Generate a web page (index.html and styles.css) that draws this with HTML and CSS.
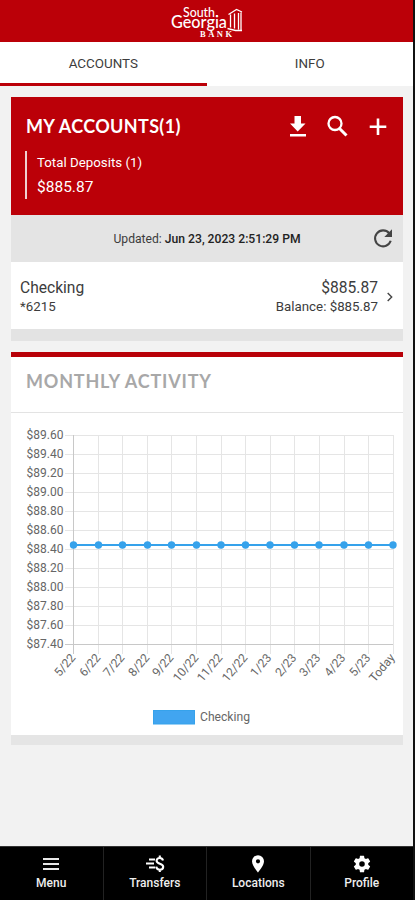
FILE: index.html
```html
<!DOCTYPE html>
<html lang="en">
<head>
<meta charset="utf-8">
<title>South Georgia Bank</title>
<link rel="stylesheet" href="styles.css">
</head>
<body>
<div class="screen">
  <header class="brand">
    <svg width="74" height="36" viewBox="169 4 74 36" fill="#fff" class="logo">
      <text x="182" y="16.500" font-size="14" textLength="32" lengthAdjust="spacingAndGlyphs">South</text>
      <text x="170" y="28" font-size="16.500" textLength="56" lengthAdjust="spacingAndGlyphs">Georgia</text>
      <text x="199" y="37" class="logo-bank" font-size="8.500" textLength="32">BANK</text>
      <path d="M227.500 14.500l8-5 5.500 2.500M229.500 14.500v13M233.500 13.500v15M237.500 13v16.500M240 12.500v18M226.500 28.500l8 2h6.500" fill="none" stroke="#fff" stroke-width="1.300"/>
      <path d="M215 15h1.500v1.500H215z"/>
    </svg>
  </header>
  <nav class="tabs">
    <div class="tab active"><span>ACCOUNTS</span></div>
    <div class="tab"><span>INFO</span></div>
  </nav>
  <main>
    <section class="card accounts">
      <div class="summary">
        <div class="summary-top">
          <h1>MY ACCOUNTS(1)</h1>
          <svg width="100" height="24" viewBox="288 115 100 24" fill="#fff">
            <path d="M294.500 116h6.500v7.500h4.500l-7.800 8-7.700-8h4.500zM290 134h16v2.500h-16z"/>
            <circle cx="335" cy="123.500" r="6.500" fill="none" stroke="#fff" stroke-width="2.300"/>
            <path d="M339.500 128.500l7 7" stroke="#fff" stroke-width="3"/>
            <path d="M376.700 118.500h2.600v7h7v2.500h-7v7h-2.600v-7h-7v-2.500h7z"/>
          </svg>
        </div>
        <div class="total">
          <div class="total-label">Total Deposits (1)</div>
          <div class="total-value">$885.87</div>
        </div>
      </div>
      <div class="updated">
        <span>Updated: <b>Jun 23, 2023 2:51:29 PM</b></span>
        <svg class="refresh" width="20" height="20" viewBox="0 0 20 20">
          <path d="M16.200 4.200A8 8 0 1 0 17.700 11.800" fill="none" stroke="#444" stroke-width="2.100"/>
          <path d="M19 .3v7.700h-7.700z" fill="#444"/>
        </svg>
      </div>
      <div class="account">
        <div class="col"><div class="name">Checking</div><div class="sub">*6215</div></div>
        <div class="col amount"><div class="name">$885.87</div><div class="sub">Balance: $885.87</div></div>
        <svg width="6" height="10" viewBox="0 0 6 10" fill="none" stroke="#444" stroke-width="1.400"><path d="M.7 1l4 4-4 4"/></svg>
      </div>
    </section>
    <section class="card activity">
      <h2>MONTHLY ACTIVITY</h2>
      <svg class="chart" width="392" height="322" viewBox="11 413 392 322">
        <path class="grid" d="M65 435.500H393M65 454.500H393M65 473.500H393M65 492.500H393M65 511.500H393M65 530.500H393M65 549.500H393M65 568.500H393M65 587.500H393M65 606.500H393M65 625.500H393"/>
        <path class="grid" d="M98.500 435V654M122.500 435V654M147.500 435V654M171.500 435V654M196.500 435V654M221.500 435V654M245.500 435V654M270.500 435V654M294.500 435V654M319.500 435V654M344.500 435V654M368.500 435V654M393.500 435V654"/>
        <path class="axis" d="M65 644.500H393M73.500 435V654"/>
        <g class="ylabels">
          <text x="63.500" y="438.500">$89.60</text><text x="63.500" y="457.500">$89.40</text><text x="63.500" y="476.500">$89.20</text><text x="63.500" y="495.500">$89.00</text><text x="63.500" y="514.500">$88.80</text><text x="63.500" y="533.500">$88.60</text><text x="63.500" y="552.500">$88.40</text><text x="63.500" y="571.500">$88.20</text><text x="63.500" y="590.500">$88.00</text><text x="63.500" y="609.500">$87.80</text><text x="63.500" y="628.500">$87.60</text><text x="63.500" y="647.500">$87.40</text>
        </g>
        <path d="M73.500 545H393" stroke="#36a2eb" stroke-width="2.200"/>
        <g fill="#36a2eb">
          <circle cx="73.500" cy="545" r="3.700"/><circle cx="98.500" cy="545" r="3.700"/><circle cx="122.500" cy="545" r="3.700"/><circle cx="147.500" cy="545" r="3.700"/><circle cx="171.500" cy="545" r="3.700"/><circle cx="196.500" cy="545" r="3.700"/><circle cx="221" cy="545" r="3.700"/><circle cx="245.500" cy="545" r="3.700"/><circle cx="270" cy="545" r="3.700"/><circle cx="294.500" cy="545" r="3.700"/><circle cx="319" cy="545" r="3.700"/><circle cx="344" cy="545" r="3.700"/><circle cx="368.500" cy="545" r="3.700"/><circle cx="393" cy="545" r="3.700"/>
        </g>
        <g class="xlabels">
          <text transform="translate(76 658) rotate(-50)">5/22</text>
          <text transform="translate(101 658) rotate(-50)">6/22</text>
          <text transform="translate(125 658) rotate(-50)">7/22</text>
          <text transform="translate(150 658) rotate(-50)">8/22</text>
          <text transform="translate(174 658) rotate(-50)">9/22</text>
          <text transform="translate(199 658) rotate(-50)">10/22</text>
          <text transform="translate(223 658) rotate(-50)">11/22</text>
          <text transform="translate(248 658) rotate(-50)">12/22</text>
          <text transform="translate(272 658) rotate(-50)">1/23</text>
          <text transform="translate(297 658) rotate(-50)">2/23</text>
          <text transform="translate(321 658) rotate(-50)">3/23</text>
          <text transform="translate(346 658) rotate(-50)">4/23</text>
          <text transform="translate(371 658) rotate(-50)">5/23</text>
          <text transform="translate(395.500 658) rotate(-50)">Today</text>
        </g>
        <rect x="153.500" y="710.500" width="41" height="13.500" fill="#41a5f0" stroke="#36a2eb"/>
        <text class="legend" x="200" y="721" textLength="50" lengthAdjust="spacingAndGlyphs">Checking</text>
      </svg>
    </section>
  </main>
  <footer class="bottom">
    <div class="item">
      <svg width="20" height="20" viewBox="0 0 20 20" fill="#e8e8e8"><path d="M2 4h16v2H2zM2 9h16v2H2zM2 14h16v2H2z"/></svg>
      <span>Menu</span>
    </div>
    <div class="item">
      <svg width="20" height="20" viewBox="0 0 20 20" fill="none" stroke="#fff"><path d="M4 5.500h6M1 9.500h8M4 13.500h6" stroke-width="1.800"/><path d="M18 6.500C17.500 4.600 16.300 4 14.700 4c-1.900 0-3.100 1-3.100 2.700 0 3.900 6.600 2 6.600 6 0 1.900-1.400 3-3.400 3s-3.300-1-3.600-3M14.800 1.500V4M14.800 15.500V18" stroke-width="2.100"/></svg>
      <span>Transfers</span>
    </div>
    <div class="item">
      <svg width="20" height="20" viewBox="0 0 20 20" fill="#fff"><path fill-rule="evenodd" d="M10 1.300a6 6 0 0 0-6 6c0 4.500 6 11.200 6 11.200s6-6.700 6-11.200a6 6 0 0 0-6-6zm0 3.900a2.100 2.100 0 1 1 0 4.200 2.100 2.100 0 0 1 0-4.200z"/></svg>
      <span>Locations</span>
    </div>
    <div class="item">
      <svg width="20" height="20" viewBox="0.500 0.500 23 23" fill="#fff"><path d="M19.140 12.940c.04-.3.060-.61.060-.94s-.02-.64-.07-.94l2.030-1.580a.49.490 0 0 0 .12-.61l-1.920-3.320a.488.488 0 0 0-.59-.22l-2.390.96c-.5-.38-1.030-.7-1.620-.94l-.36-2.540a.484.484 0 0 0-.48-.41h-3.840c-.24 0-.43.170-.47.410l-.36 2.540c-.59.240-1.130.57-1.620.94l-2.390-.96a.48.480 0 0 0-.59.220L2.740 8.870c-.12.210-.08.470.12.610l2.030 1.580c-.05.300-.09.630-.09.940s.02.640.07.940l-2.030 1.580a.49.490 0 0 0-.12.610l1.920 3.320c.12.220.37.290.59.220l2.390-.96c.5.380 1.030.7 1.620.94l.36 2.540c.05.240.24.410.48.410h3.840c.24 0 .44-.17.47-.41l.36-2.540c.59-.24 1.130-.56 1.620-.94l2.390.96c.22.080.47 0 .59-.22l1.920-3.320a.48.480 0 0 0-.12-.61zM12 15.200a3.200 3.200 0 1 1 0-6.400 3.200 3.200 0 0 1 0 6.400z"/></svg>
      <span>Profile</span>
    </div>
  </footer>
</div>
</body>
</html>
```
FILE: styles.css
```css
* { box-sizing: border-box; }
body {
  margin: 0;
  background: #111;
  font-family: Roboto, "Liberation Sans", sans-serif;
  color: #3c3c3c;
}
.screen {
  width: 413px;
  height: 900px;
  display: flex;
  flex-direction: column;
  background: #f2f2f2;
}
svg { display: block; flex: none; }
.brand {
  height: 42px;
  background: #bb0008;
  display: flex;
  justify-content: center;
  padding-top: 4px;
}
.logo { font-family: Lato, sans-serif; font-weight: 500; }
.logo-bank { font-family: "Liberation Serif", serif; font-weight: bold; }
.tabs { display: flex; height: 44px; background: #fff; }
.tab {
  flex: 1;
  display: flex;
  align-items: center;
  justify-content: center;
  font-size: 13.4px;
  padding-top: 1px;
  border-bottom: 3px solid transparent;
}
.tab.active { border-color: #bb0008; }
main { flex: 1; padding: 11px 10px 0 11px; }
.card { background: #fff; }
.accounts { box-shadow: 0 12px 0 #e3e3e3; }
.summary { height: 118px; background: #bb0008; color: #fff; padding: 18px 15px 0 14px; }
.summary-top { display: flex; justify-content: space-between; height: 36px; }
h1 { margin: -1px 0 0 1px; font: bold 18px/24px Lato, sans-serif; letter-spacing: .35px; }
.total { border-left: 2px solid #f0d0d0; height: 48px; padding-left: 10px; }
.total-label { font-size: 13.3px; line-height: 23px; }
.total-value { font-size: 15.5px; line-height: 26px; }
.updated {
  height: 47px;
  background: #e4e4e4;
  display: grid;
  grid-template-columns: 20px 1fr 20px;
  align-items: center;
  padding: 0 10px;
  font-size: 12.15px;
  text-align: center;
}
.updated span { grid-column: 2; }
.updated b { font-weight: 500; color: #222; }
.account { height: 67px; display: flex; align-items: center; padding: 2px 10px 0 9px; gap: 9px; }
.col { flex: 1; }
.amount { text-align: right; }
.name { font-size: 15.6px; line-height: 20px; }
.sub { font-size: 13.3px; line-height: 18px; }
.activity { margin-top: 23px; border-top: 5px solid #b80008; box-shadow: 0 10px 0 #e5e5e5; }
h2 {
  margin: 0;
  height: 56px;
  border-bottom: 1px solid #e3e3e3;
  padding: 12px 15px 0;
  font: bold 18px/24px Lato, sans-serif;
  letter-spacing: .8px;
  color: #a8a8a8;
}
.chart { font-size: 12px; fill: #666; }
.grid { stroke: #e5e5e5; fill: none; }
.axis { stroke: #c8c8c8; fill: none; }
.ylabels, .xlabels { text-anchor: end; }
.bottom { height: 54px; background: #000; display: flex; border-top: 1px solid #333; }
.item {
  flex: 1;
  display: flex;
  flex-direction: column;
  align-items: center;
  padding-top: 7px;
  color: #eee;
  font-size: 12px;
  line-height: 18px;
  font-weight: 500;
}
.item + .item { border-left: 1px solid #222; }
```
